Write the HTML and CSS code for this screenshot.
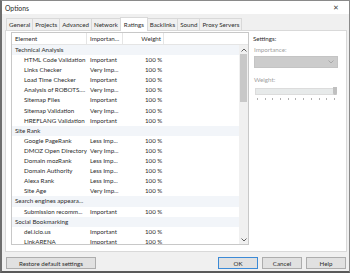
FILE: index.html
```html
<!DOCTYPE html>
<html lang="en">
  <head>
    <meta charset="UTF-8" />
    <title>Options</title>
    <link rel="stylesheet" href="styles.css">
  </head>
  <body>
    <div class="window">
      <div class="titlebar">
        <span class="title">Options</span>
        <span class="close">✕</span>
      </div>

      <div class="body">
        <div class="tabs">
          <div class="tab">General</div>
          <div class="tab">Projects</div>
          <div class="tab">Advanced</div>
          <div class="tab">Network</div>
          <div class="tab active">Ratings</div>
          <div class="tab">Backlinks</div>
          <div class="tab">Sound</div>
          <div class="tab">Proxy Servers</div>
        </div>

        <div class="panel">
          <!-- ratings list -->
          <div class="list">
            <div class="list-head">
              <div class="col-el">Element</div>
              <div class="col-imp">Importan...</div>
              <div class="col-w">Weight</div>
            </div>
            <div class="list-body">
              <div class="rows">
                <div class="group">Technical Analysis</div>
                <div class="row"><span class="col-el">HTML Code Validation</span><span class="col-imp">Important</span><span class="col-w">100 %</span></div>
                <div class="row"><span class="col-el">Links Checker</span><span class="col-imp">Very Imp...</span><span class="col-w">100 %</span></div>
                <div class="row"><span class="col-el">Load Time Checker</span><span class="col-imp">Important</span><span class="col-w">100 %</span></div>
                <div class="row"><span class="col-el">Analysis of ROBOTS....</span><span class="col-imp">Very Imp...</span><span class="col-w">100 %</span></div>
                <div class="row"><span class="col-el">Sitemap Files</span><span class="col-imp">Important</span><span class="col-w">100 %</span></div>
                <div class="row"><span class="col-el">Sitemap Validation</span><span class="col-imp">Very Imp...</span><span class="col-w">100 %</span></div>
                <div class="row"><span class="col-el">HREFLANG Validation</span><span class="col-imp">Important</span><span class="col-w">100 %</span></div>
                <div class="group">Site Rank</div>
                <div class="row"><span class="col-el">Google PageRank</span><span class="col-imp">Less Imp...</span><span class="col-w">100 %</span></div>
                <div class="row"><span class="col-el">DMOZ Open Directory</span><span class="col-imp">Very Imp...</span><span class="col-w">100 %</span></div>
                <div class="row"><span class="col-el">Domain mozRank</span><span class="col-imp">Less Imp...</span><span class="col-w">100 %</span></div>
                <div class="row"><span class="col-el">Domain Authority</span><span class="col-imp">Less Imp...</span><span class="col-w">100 %</span></div>
                <div class="row"><span class="col-el">Alexa Rank</span><span class="col-imp">Less Imp...</span><span class="col-w">100 %</span></div>
                <div class="row"><span class="col-el">Site Age</span><span class="col-imp">Very Imp...</span><span class="col-w">100 %</span></div>
                <div class="group">Search engines appeara...</div>
                <div class="row"><span class="col-el">Submission recomm...</span><span class="col-imp">Important</span><span class="col-w">100 %</span></div>
                <div class="group">Social Bookmarking</div>
                <div class="row"><span class="col-el">del.icio.us</span><span class="col-imp">Important</span><span class="col-w">100 %</span></div>
                <div class="row"><span class="col-el">LinkARENA</span><span class="col-imp">Important</span><span class="col-w">100 %</span></div>
              </div>
              <div class="scrollbar">
                <div class="arrow">
                  <svg width="6" height="4" viewBox="0 0 6 4"><path d="M0.5 3.5 L3 1 L5.5 3.5" fill="none" stroke="#606060" stroke-width="1"/></svg>
                </div>
                <div class="track"><div class="thumb"></div></div>
                <div class="arrow">
                  <svg width="6" height="4" viewBox="0 0 6 4"><path d="M0.5 0.5 L3 3 L5.5 0.5" fill="none" stroke="#606060" stroke-width="1"/></svg>
                </div>
              </div>
            </div>
          </div>

          <!-- settings side -->
          <div class="settings">
            <div class="settings-title">Settings:</div>
            <div class="field-label">Importance:</div>
            <div class="combo">
              <svg width="6" height="4" viewBox="0 0 6 4"><path d="M0.5 0.5 L3 3 L5.5 0.5" fill="none" stroke="#a8a8a8" stroke-width="1"/></svg>
            </div>
            <div class="field-label">Weight:</div>
            <div class="slider">
              <div class="slider-track"></div>
              <div class="slider-thumb"></div>
            </div>
            <div class="ticks">
              <span></span><span></span><span></span><span></span><span></span><span></span>
              <span></span><span></span><span></span><span></span><span></span>
            </div>
          </div>
        </div>

        <div class="footer">
          <button class="btn btn-wide">Restore default settings</button>
          <div class="spacer"></div>
          <button class="btn btn-default">OK</button>
          <button class="btn">Cancel</button>
          <button class="btn">Help</button>
        </div>
      </div>
    </div>
  </body>
</html>
```

FILE: styles.css
```css
html,
body {
  margin: 0;
  width: 350px;
  height: 273px;
  overflow: hidden;
  font-family: Lato, 'Noto Sans', sans-serif;
  font-size: 6.2px;
  color: #2c2c2c;
  background-color: #ffffff;
}

.window {
  box-sizing: border-box;
  width: 350px;
  height: 273px;
  border: 1px solid #8a8a8a;
  border-left: 2px solid #6e6e6e;
  border-bottom: 2px solid #5a5a5a;
  display: flex;
  flex-direction: column;
  background-color: #f0f0f0;
}

/* title bar */
.titlebar {
  height: 13px;
  flex-shrink: 0;
  display: flex;
  align-items: center;
  justify-content: space-between;
  padding: 0 10px 0 3px;
  background-color: #ffffff;
  font-size: 6.8px;
}

.close {
  font-size: 7px;
  color: #444;
}

.body {
  flex: 1;
  display: flex;
  flex-direction: column;
  padding: 3px 2px 0 3px;
}

/* tabs */
.tabs {
  display: flex;
  align-items: flex-end;
  height: 13px;
  padding-left: 1px;
}

.tab {
  height: 11px;
  line-height: 11px;
  padding: 0 2px;
  border: 1px solid #d9d9d9;
  border-bottom: none;
  margin-right: -1px;
  background-color: #f0f0f0;
}

.tab.active {
  height: 13px;
  line-height: 13px;
  background-color: #ffffff;
  position: relative;
  z-index: 1;
  margin-bottom: -1px;
  padding: 0 3px;
}

/* tab panel */
.panel {
  box-sizing: border-box;
  height: 222px;
  background-color: #ffffff;
  border: 1px solid #d9d9d9;
  display: flex;
  padding: 1px 4px 0 5px;
}

.list {
  box-sizing: border-box;
  width: 238px;
  height: 213px;
  border: 1px solid #c8c8c8;
  display: flex;
  flex-direction: column;
}

.list-head {
  display: flex;
  height: 11px;
  line-height: 11px;
  border-bottom: 1px solid #e5e5e5;
  flex-shrink: 0;
}

.list-head > div {
  box-sizing: border-box;
  border-right: 1px solid #e5e5e5;
  padding-left: 3px;
}

.list-head .col-w {
  text-align: right;
  padding-right: 2px;
}

.col-el {
  width: 75px;
  flex-shrink: 0;
}

.col-imp {
  width: 36px;
  flex-shrink: 0;
}

.col-w {
  width: 41px;
  flex-shrink: 0;
}

.list-body {
  flex: 1;
  display: flex;
  overflow: hidden;
}

.rows {
  flex: 1;
  overflow: hidden;
}

.group {
  height: 10.1px;
  line-height: 10px;
  padding-left: 3px;
  background-color: #f2f5f9;
  white-space: nowrap;
}

.row {
  display: flex;
  height: 10.1px;
  line-height: 10px;
  white-space: nowrap;
}

.row .col-el {
  box-sizing: border-box;
  padding-left: 12px;
  overflow: hidden;
}

.row .col-imp {
  box-sizing: border-box;
  padding-left: 3px;
  overflow: hidden;
}

.row .col-w {
  box-sizing: border-box;
  padding-left: 22px;
}

/* scrollbar */
.scrollbar {
  width: 9px;
  display: flex;
  flex-direction: column;
  background-color: #f0f0f0;
}

.arrow {
  height: 9px;
  display: flex;
  align-items: center;
  justify-content: center;
}

.track {
  flex: 1;
  padding: 0 1px;
}

.thumb {
  height: 48px;
  background-color: #c8c8c8;
}

/* settings area */
.settings {
  flex: 1;
  padding: 1px 0 0 4px;
}

.settings-title {
  height: 11px;
  line-height: 11px;
}

.field-label {
  color: #a0a0a0;
  height: 11px;
  line-height: 12px;
  padding-left: 1px;
}

.combo {
  box-sizing: border-box;
  height: 12px;
  margin: 1px 4px 0 1px;
  background-color: #cccccc;
  border: 1px solid #c4c4c4;
  display: flex;
  align-items: center;
  justify-content: flex-end;
  padding-right: 3px;
}

.combo + .field-label {
  margin-top: 6px;
}

.slider {
  position: relative;
  height: 9px;
  margin: 2px 5px 0 2px;
  display: flex;
  align-items: center;
}

.slider-track {
  flex: 1;
  height: 5px;
  background-color: #e7eaea;
  border: 1px solid #dcdcdc;
}

.slider-thumb {
  position: absolute;
  right: 0;
  top: 0;
  width: 4px;
  height: 8px;
  background-color: #c0c0c0;
  border-radius: 0 0 2px 2px;
}

.ticks {
  display: flex;
  justify-content: space-between;
  margin: 2px 7px 0 4px;
}

.ticks span {
  width: 1px;
  height: 2px;
  background-color: #b0b0b0;
}

/* footer buttons */
.footer {
  display: flex;
  align-items: center;
  gap: 4px;
  padding: 5px 1px 0 1px;
}

.spacer {
  flex: 1;
}

.btn {
  box-sizing: border-box;
  height: 12px;
  width: 40px;
  padding: 0;
  margin: 0;
  font-family: inherit;
  font-size: 6.2px;
  color: #2c2c2c;
  background-color: #e1e1e1;
  border: 1px solid #adadad;
}

.btn-wide {
  width: 90px;
}

.btn-default {
  border-color: #3c8ad6;
}
```
